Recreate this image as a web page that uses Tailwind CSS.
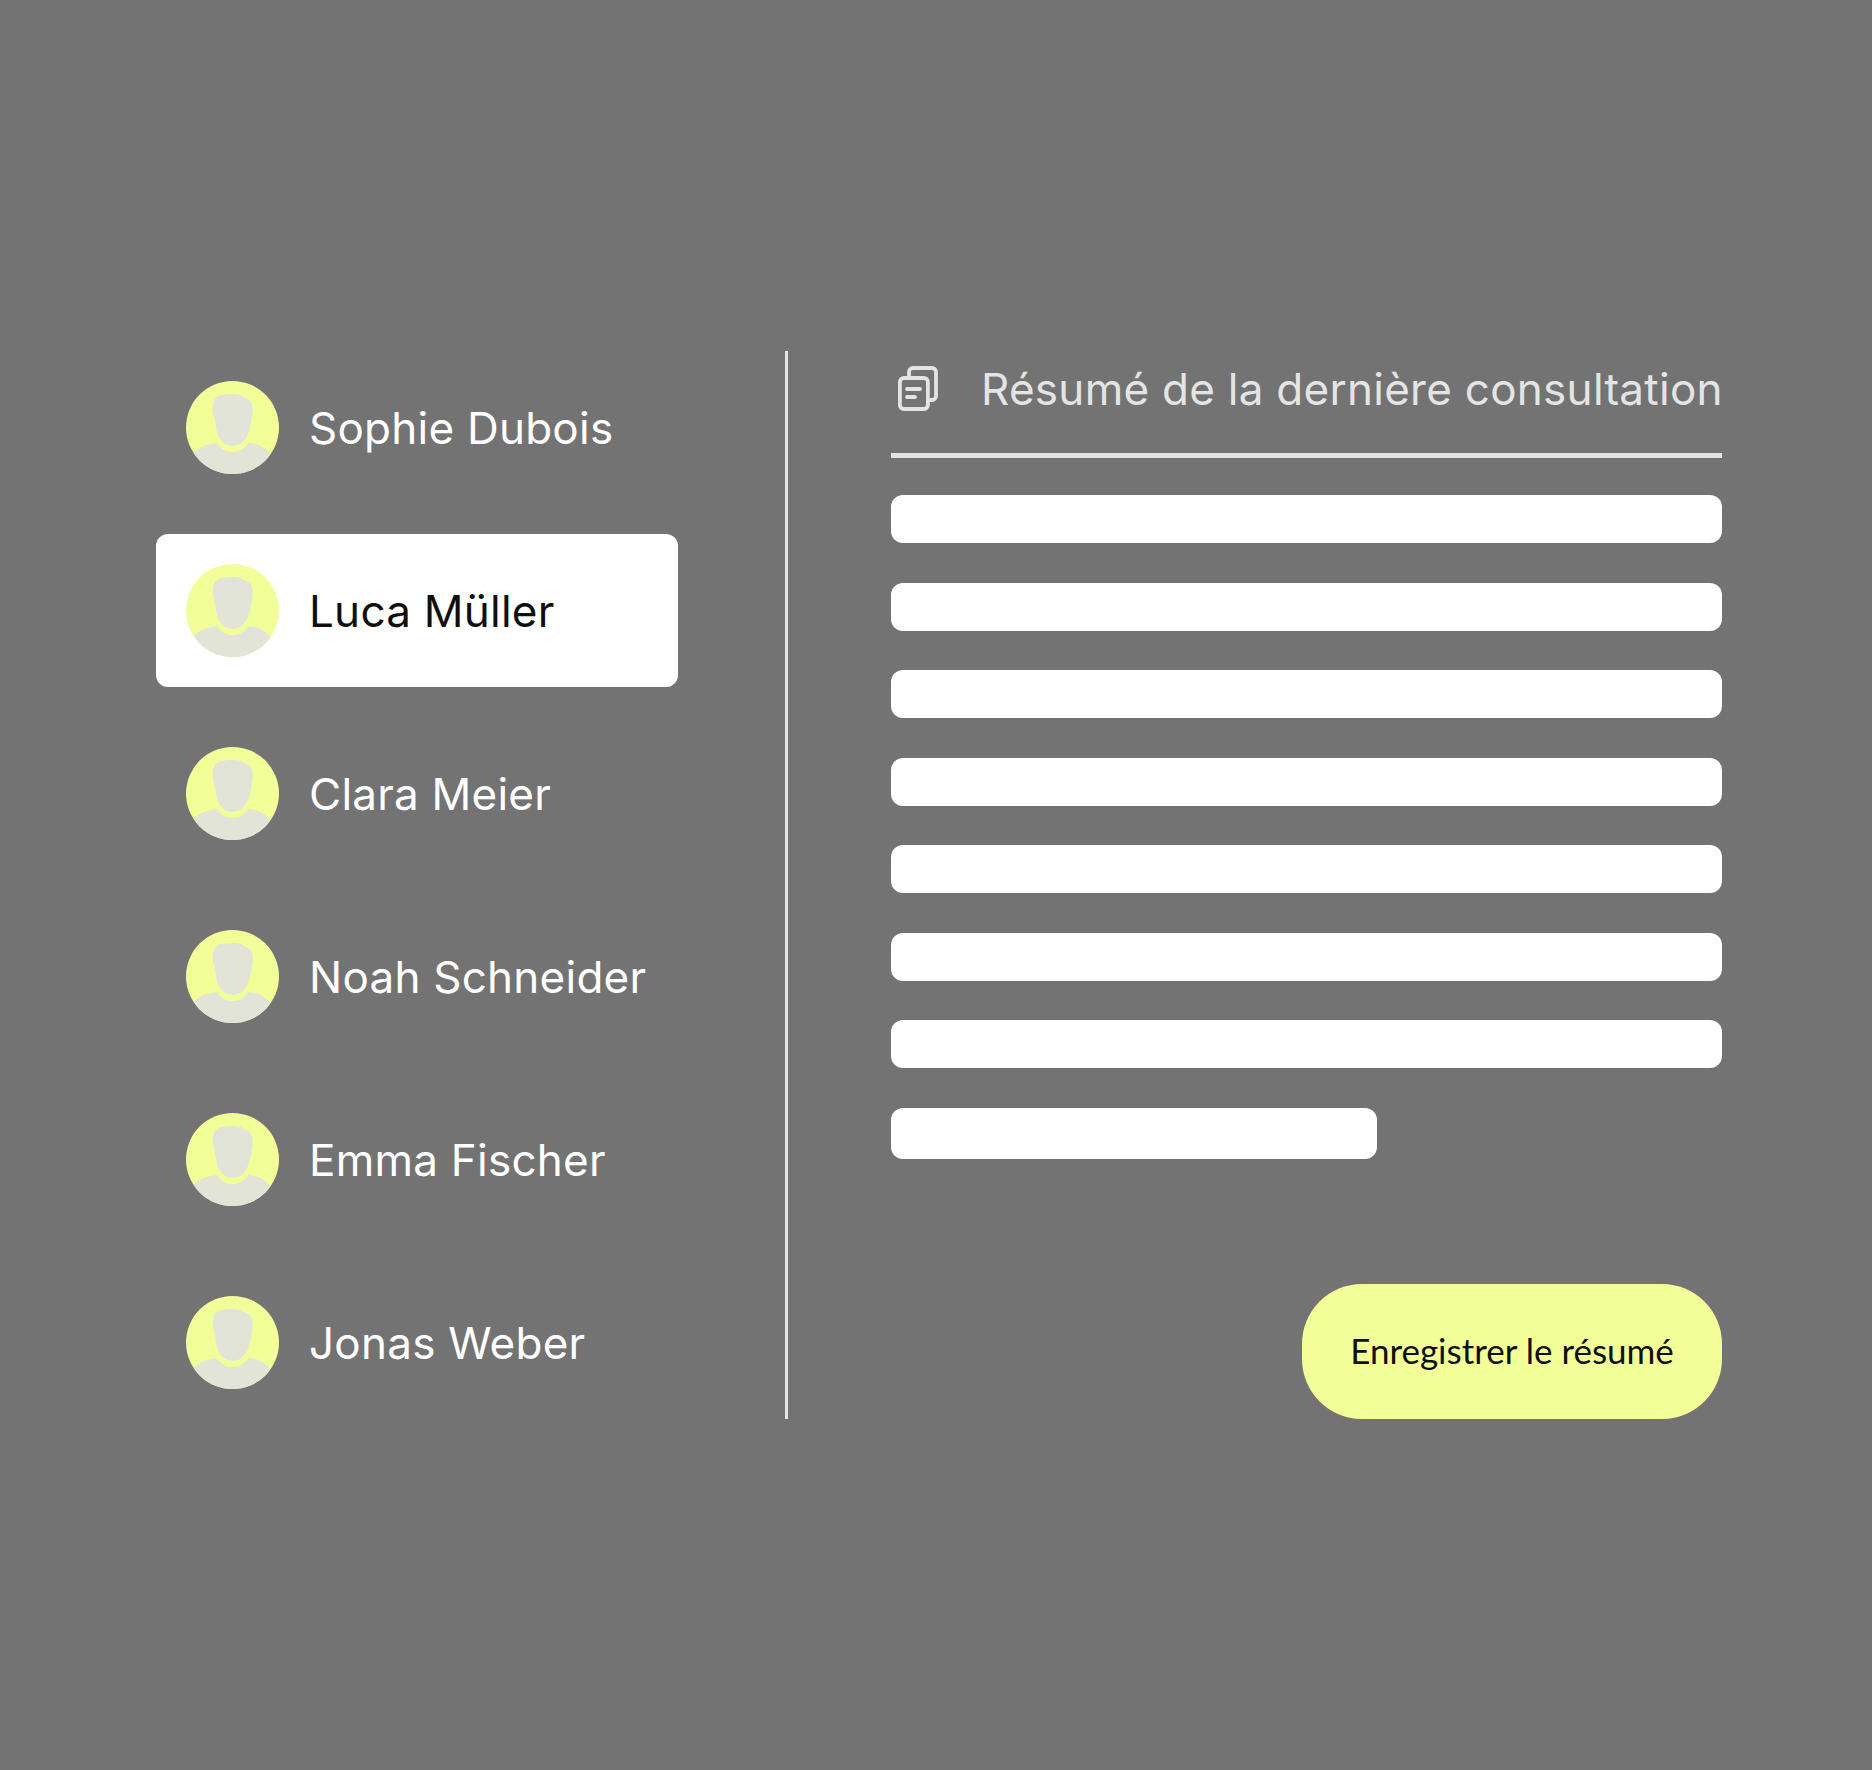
<!DOCTYPE html>
<html lang="fr">
<head>
<meta charset="utf-8">
<script src="https://cdn.jsdelivr.net/npm/@tailwindcss/browser@4"></script>
<title>Résumé</title>
</head>
<body class="bg-[#737373] font-['Inter','Liberation_Sans',sans-serif]">
<main class="w-[1872px] h-[1770px] pt-[351px] pl-[156px] flex">
    <!-- Patient list -->
    <ul id="patients" class="w-[522px] h-[1068px] flex flex-col gap-[30px]"></ul>

    <!-- Divider -->
    <div class="w-[3px] h-[1068px] ml-[107px] bg-[#e4e4e4]"></div>

    <!-- Summary -->
    <section class="w-[831px] h-[1068px] ml-[103px] flex flex-col">
        <div class="h-[107px] border-b-[5px] border-[#e4e4e4] flex items-start">
            <svg class="mt-[15px] ml-[7px] w-[40px] h-[45px] shrink-0" viewBox="0 0 40 45" fill="none" stroke="#e4e4e4" stroke-width="3.8" stroke-linecap="round" stroke-linejoin="round">
                <rect x="1.9" y="12" width="28" height="31" rx="4"/>
                <path d="M11 11V6a4 4 0 0 1 4-4h19a4 4 0 0 1 4 4v24a4 4 0 0 1-4 4h-4"/>
                <path d="M9 23h13M9 31h8"/>
            </svg>
            <h2 class="ml-[43px] text-[44px] leading-[54px] mt-[11px] font-normal tracking-[0.27px] whitespace-nowrap text-[#e4e4e4]">Résumé de la dernière consultation</h2>
        </div>
        <div class="mt-[37px] flex flex-col gap-[39.5px]">
            <div class="h-[48px] rounded-[12px] bg-white"></div>
            <div class="h-[48px] rounded-[12px] bg-white"></div>
            <div class="h-[48px] rounded-[12px] bg-white"></div>
            <div class="h-[48px] rounded-[12px] bg-white"></div>
            <div class="h-[48px] rounded-[12px] bg-white"></div>
            <div class="h-[48px] rounded-[12px] bg-white"></div>
            <div class="h-[48px] rounded-[12px] bg-white"></div>
            <div class="h-[51px] w-[486px] rounded-[12px] bg-white"></div>
        </div>
        <button class="mt-auto self-end w-[420px] h-[135px] pb-[2px] rounded-[60px] bg-[#f2ff99] text-[#0f0f0f] text-[35px] font-['Lato','Liberation_Sans',sans-serif]">Enregistrer le résumé</button>
    </section>
</main>

<script>
    const patients = ['Sophie Dubois', 'Luca Müller', 'Clara Meier', 'Noah Schneider', 'Emma Fischer', 'Jonas Weber'];
    const selected = 'Luca Müller';

    document.getElementById('patients').innerHTML = patients.map(name => `
        <li class="h-[153px] pl-[30px] flex items-center gap-[30px] rounded-[12px] ${name === selected ? 'bg-white text-[#0f0f0f]' : 'text-white'}">
            <svg class="w-[93px] h-[93px] rounded-full shrink-0" viewBox="0 0 93 93">
                <rect width="93" height="93" fill="#f2ff99"/>
                <path fill="#e3e4d8" d="M40.7 13.3C45 12.7 52 12.7 55.7 14.3C57 16.5 61 16.5 63 18.5C66 21 67 24 66.7 28C66.8 33 65.5 40 64.5 44C63.5 49 62.5 53 60.5 56C58 61 53 65 46.7 65C40 65 35 61 32.5 55.5C30 50 29.5 42 28.5 37C26.5 33 26.7 28 27 24C27.5 19 30 15.5 34 14.5C36 13.8 38 13.5 40.7 13.3Z"/>
                <path fill="#e3e4d8" d="M0 93V82C6 74 12 63 31.3 62.3C35 68 40 71 46.7 71C53 71 58.5 68 62 62.3C72 62 80 66 86 76L93 82V93Z"/>
            </svg>
            <span class="text-[44px] font-normal tracking-[0.24px] whitespace-nowrap">${name}</span>
        </li>
    `).join('');
</script>
</body>
</html>
